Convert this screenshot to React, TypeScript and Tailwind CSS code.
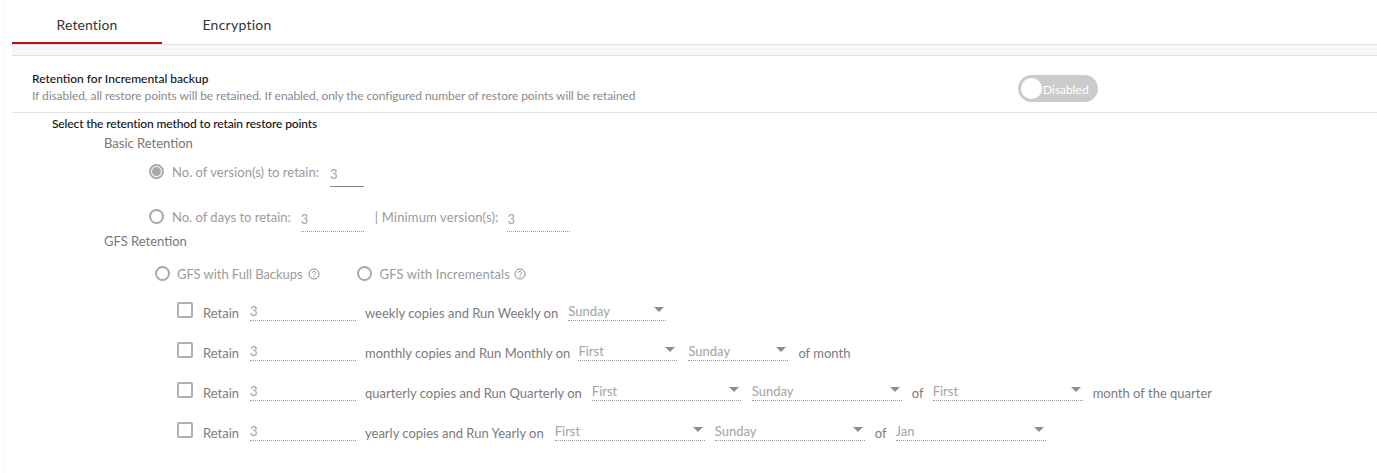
import React from "react";

/* Retention settings panel */

function Radio({ checked }: { checked?: boolean }) {
  return (
    <span className="flex h-[15px] w-[15px] shrink-0 items-center justify-center rounded-full border-2 border-[#a8a8a8] bg-white">
      {checked && <span className="h-[9px] w-[9px] rounded-full bg-[#a8a8a8]" />}
    </span>
  );
}

function Help({ ml }: { ml: string }) {
  return (
    <svg width="12" height="12" viewBox="0 0 12 12" fill="none" stroke="#8a8a8a" strokeWidth="1" className={ml + " mt-[3px] shrink-0"}>
      <circle cx="6" cy="6" r="5" />
      <path d="M4.4 4.8c0-2 3.2-2 3.2-.1 0 1.2-1.6 1.2-1.6 2.5" />
      <path d="M6 8v1.2" />
    </svg>
  );
}

function NumInput({ w, dotted = true, value = "3", compact = false }: { w: number; dotted?: boolean; value?: string; compact?: boolean }) {
  return (
    <span
      className={
        "block text-[13px] leading-[18px] text-[#a3a3a3] " +
        (dotted ? "border-b border-dotted border-[#9a9a9a]" : "border-b border-solid border-[#8a8a8a]")
      }
      style={{ width: w, height: compact ? 20 : 24, paddingTop: compact ? 1 : 2 }}
    >
      {value}
    </span>
  );
}

function Select({ w, value }: { w: number; value: string }) {
  return (
    <span
      className="relative block h-[20px] border-b border-dotted border-[#9a9a9a] pt-[1px] text-[13px] leading-[18px] text-[#a3a3a3]"
      style={{ width: w }}
    >
      {value}
      <span className="absolute right-[2px] top-[6px] h-0 w-0 border-x-[5px] border-t-[5px] border-x-transparent border-t-[#8e8e8e]" />
    </span>
  );
}

type Part = { text?: string; select?: string; w?: number; ml?: number };

function RetainRow({ parts }: { parts: Part[] }) {
  return (
    <div className="flex h-10 items-start pl-[177px] text-[13px] text-[#7b7b7b]">
      <span className="mt-[1px] h-4 w-4 shrink-0 rounded-[2px] border-2 border-[#b0b0b0] bg-white" />
      <span className="ml-[10px] mt-[3px] w-[47px] leading-[18px]">Retain</span>
      <span className="w-[106px]">
        <NumInput w={106} compact />
      </span>
      {parts.map((p, i) =>
        p.select ? (
          <span key={i} style={{ marginLeft: p.ml ?? 10 }}>
            <Select w={p.w ?? 100} value={p.select} />
          </span>
        ) : (
          <span key={i} className="mt-[3px] whitespace-nowrap leading-[18px]" style={{ marginLeft: p.ml ?? 9 }}>
            {p.text}
          </span>
        )
      )}
    </div>
  );
}

export default function App() {
  return (
    <div className="h-[473px] w-[1377px] overflow-hidden bg-white font-['Lato','Noto_Sans',sans-serif]">
      <div className="ml-[3px] h-[473px] border-l border-[#f7f7f7] pl-2">
        {/* tabs */}
        <div className="flex h-[45px] border-b border-[#e2e2e2] text-[14px] text-[#333]">
          <div className="h-[44px] w-[150px] border-b-2 border-[#b90c0c] pt-[15px] text-center leading-[20px] tracking-[0.1px]">Retention</div>
          <div className="w-[150px] pt-[15px] text-center leading-[20px] tracking-[0.25px]">Encryption</div>
        </div>
        <div className="h-[11px] border-b border-[#e2e2e2] bg-[#f7f7f7]" />

        {/* header row */}
        <div className="flex h-[57px] items-start border-b border-[#e2e2e2] pl-5 pt-[14px]">
          <div className="w-[986px]">
            <div className="text-[12px] leading-[17px] font-medium text-[#111]">Retention for Incremental backup</div>
            <div className="pt-[1px] text-[12px] leading-[16px] tracking-[-0.07px] text-[#8a8a8a]">
              If disabled, all restore points will be retained. If enabled, only the configured number of restore points will be retained
            </div>
          </div>
          <div className="mt-[5px] flex h-[27px] w-20 items-center rounded-full bg-[#cbcbcb] pl-[3px]">
            <span className="h-[21px] w-[21px] rounded-full bg-white" />
            <span className="ml-[1px] mt-[2px] text-[12px] text-white">Disabled</span>
          </div>
        </div>

        <div className="-ml-3 pt-[2px]">
          <div className="pl-[52px] text-[12px] leading-[18px] font-medium tracking-[-0.13px] text-[#111]">Select the retention method to retain restore points</div>
          <div className="pl-[104px] text-[13px] leading-[20px] text-[#777]">Basic Retention</div>

          <div className="flex h-[47px] items-start pl-[149px] pt-[10px] text-[13px] text-[#9b9b9b]">
            <span className="mt-[1px]"><Radio checked /></span>
            <span className="ml-2 whitespace-nowrap leading-[18px] tracking-[0.03px]">No. of version(s) to retain:</span>
            <span className="ml-[11px]"><NumInput w={34} dotted={false} /></span>
          </div>

          <div className="flex h-[31px] items-start pl-[149px] pt-[8px] text-[13px] text-[#9b9b9b]">
            <span className="mt-[1px]"><Radio /></span>
            <span className="ml-2 whitespace-nowrap leading-[18px]">No. of days to retain:</span>
            <span className="ml-[10px]"><NumInput w={63} /></span>
            <span className="ml-[11px] whitespace-nowrap leading-[18px] tracking-[0.15px]">| Minimum version(s):</span>
            <span className="ml-[9px]"><NumInput w={63} /></span>
          </div>

          <div className="pl-[104px] text-[13px] leading-[20px] text-[#777]">GFS Retention</div>

          <div className="flex h-[45px] items-start pl-[155px] pt-[14px] text-[13px] text-[#9b9b9b]">
            <span className="mt-[1px]"><Radio /></span>
            <span className="ml-[7px] whitespace-nowrap leading-[18px] tracking-[-0.05px]">GFS with Full Backups</span>
            <Help ml="ml-[5px]" />
            <span className="ml-[37px] mt-[1px]"><Radio /></span>
            <span className="ml-2 whitespace-nowrap leading-[18px] tracking-[0.1px]">GFS with Incrementals</span>
            <Help ml="ml-[4px]" />
          </div>

          <div className="pt-[5px]">
            <RetainRow parts={[{ text: "weekly copies and Run Weekly on" }, { select: "Sunday", w: 98 }]} />
            <RetainRow
              parts={[
                { text: "monthly copies and Run Monthly on" },
                { select: "First", w: 99, ml: 8 },
                { select: "Sunday", w: 100, ml: 11 },
                { text: "of month", ml: 10 },
              ]}
            />
            <RetainRow
              parts={[
                { text: "quarterly copies and Run Quarterly on" },
                { select: "First", w: 149 },
                { select: "Sunday", w: 150, ml: 11 },
                { text: "of", ml: 10 },
                { select: "First", w: 150, ml: 9 },
                { text: "month of the quarter", ml: 10 },
              ]}
            />
            <RetainRow
              parts={[
                { text: "yearly copies and Run Yearly on" },
                { select: "First", w: 150, ml: 11 },
                { select: "Sunday", w: 150 },
                { text: "of", ml: 10 },
                { select: "Jan", w: 150, ml: 9 },
              ]}
            />
          </div>
        </div>
      </div>
    </div>
  );
}
